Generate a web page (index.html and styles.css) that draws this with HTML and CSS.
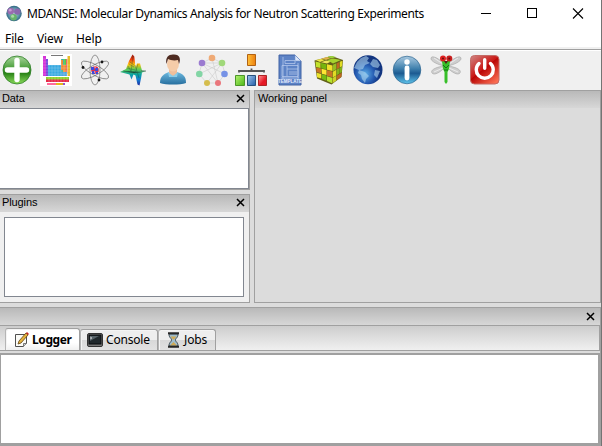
FILE: index.html
```html
<!DOCTYPE html>
<html lang="en">
<head>
<meta charset="utf-8">
<title>MDANSE: Molecular Dynamics Analysis for Neutron Scattering Experiments</title>
<link rel="stylesheet" href="styles.css">
</head>
<body>
<div class="window">
  <header class="titlebar">
    <svg class="app-icon" viewBox="0 0 17 17"><defs><radialGradient id="app"><stop offset="0" stop-color="#b9d4d8"/><stop offset=".7" stop-color="#5b93a8"/><stop offset="1" stop-color="#2f6480"/></radialGradient></defs><circle cx="8.5" cy="8.5" r="8.2" fill="url(#app)"/><circle cx="5" cy="6" r="3.5" fill="#9a6cb0"/><circle cx="12" cy="6.5" r="3.4" fill="#8a68ae"/><circle cx="8" cy="12.5" r="3.5" fill="#68b36c"/><circle cx="4.500" cy="5" r="1.500" fill="#c3a0d2"/><circle cx="7" cy="11.500" r="1.600" fill="#a8dba4"/></svg>
    <h1 class="title">MDANSE: Molecular Dynamics Analysis for Neutron Scattering Experiments</h1>
    <div class="controls">
      <svg viewBox="0 0 12 12" shape-rendering="crispEdges"><path d="M1 5.500h10" stroke="#000"/></svg>
      <svg viewBox="0 0 12 12" shape-rendering="crispEdges"><path d="M1.500 .5h9v9h-9z" fill="none" stroke="#000"/></svg>
      <svg viewBox="0 0 12 12"><path d="M1 .5l10 10M11 .5l-10 10" stroke="#000" stroke-width="1.100"/></svg>
    </div>
  </header>
  <nav class="menu"><span class="m-file">File</span><span class="m-view">View</span><span class="m-help">Help</span></nav>
  <div class="toolbar">
    <svg viewBox="0 0 32 32"><defs><linearGradient id="gr" x2="0" y2="1"><stop offset="0" stop-color="#a9d69c"/><stop offset=".45" stop-color="#459b36"/><stop offset=".6" stop-color="#268015"/><stop offset="1" stop-color="#8cdc5c"/></linearGradient></defs><circle cx="16" cy="16" r="14" fill="url(#gr)" stroke="#2f7d28" stroke-width=".8"/><path d="M16 6.500v19M6.500 16h19" stroke="#fff" stroke-width="5.400" stroke-linecap="round"/></svg>
    <svg viewBox="0 0 32 32"><path fill="#fff" d="M0 0h32v32H0z"/><path d="M11 1.500h12" stroke="#555" stroke-width=".8"/><path fill="#d435d8" d="M3 2h3v20H3z"/><path fill="#7b49db" d="M6 5h2v17H6z"/><path fill="#36a9e0" d="M8 11h14v11H8z"/><path fill="#35b49a" d="M21 5h4v13h-4z"/><path fill="#ef8a32" d="M21 6h2v10h-2zM23 11h3v9h-3z"/><path fill="#57c94a" d="M24 5h2v6h-2z"/><path fill="#ef5a51" d="M26 5h1.500v15H26z"/><path fill="#e6bc2b" d="M27.500 2H30v20h-2.500z"/><path fill="#4ba5df" d="M22 18h5v4h-5z"/><path fill="#8fd32b" d="M6 23h23v3H6z"/><path fill="#e62a47" d="M6 25.500h23V28H6z"/><path fill="#ff6a9c" d="M7 29h9v2H7z"/><path fill="#e3ba1c" d="M16 29h7v2h-7z"/><path fill="#9751ce" d="M23 29h2v2h-2z"/><path d="M3 5h3M3 8h5M3 11h27M3 14h27M3 17h27M3 20h27M9 10v12M12 10v12M15 10v12M18 10v12M9 23v5M12 23v5M15 23v5M18 23v5M21 5v23M24 5v23M27 5v23" stroke="#fff" stroke-width=".4" opacity=".5"/></svg>
    <svg viewBox="0 0 32 32"><g fill="none" stroke="#666" stroke-width=".65"><ellipse cx="16" cy="16" rx="5" ry="15"/><ellipse cx="16" cy="16" rx="5" ry="15.500" transform="rotate(60 16 16)"/><ellipse cx="16" cy="16" rx="5" ry="15.500" transform="rotate(120 16 16)"/></g><circle cx="16" cy="16" r="3.800" fill="#e22e45"/><path d="M12 13h3v3h-3zM16 14h3v3h-3zM13 17h3v3h-3zM17 18h2v2h-2z" fill="#3f49dd"/><path d="M15 12l2 1-1 2zM15 17l2 1-2 1z" fill="#f4a1ac"/><g fill="#161616"><circle cx="23" cy="8" r="1.400"/><circle cx="4" cy="13.500" r="1.400"/><circle cx="20" cy="26" r="1.400"/></g></svg>
    <svg viewBox="0 0 32 32"><defs><linearGradient id="jet" x2="0" y1="0" y2="1"><stop offset="0" stop-color="#9c160c"/><stop offset=".16" stop-color="#ef3b09"/><stop offset=".32" stop-color="#ffc20b"/><stop offset=".47" stop-color="#67cd50"/><stop offset=".64" stop-color="#0aa5a1"/><stop offset=".82" stop-color="#157bd0"/><stop offset="1" stop-color="#1b279f"/></linearGradient></defs><path d="M2 18l6-3 3-8L14.500 .5l1.800 2 1.200 11 1.500-4 3 0 2 7 4 .5-4 1.500-1 6-1.500 7-2-1-2-9-2-1-2 5-2-5z" fill="url(#jet)"/><path d="M23 17h5" stroke="#555" stroke-width=".7"/><path d="M5 17l11 2 7-1M10 12l4 7M15 2l-2 16M17 11l4 13M20 10l-3 9M12 8l4 3M11 10l5 3M9 14l8 2" stroke="#173e39" stroke-width=".5" opacity=".65"/></svg>
    <svg viewBox="0 0 32 32"><defs><linearGradient id="bl" x2="0" y2="1"><stop offset="0" stop-color="#6db9df"/><stop offset="1" stop-color="#276f9f"/></linearGradient></defs><path d="M3 29c0-7 4-9 9-11h8c6 2 9 4 9 11-6 2-20 2-26 0z" fill="url(#bl)"/><path d="M12 14h8v5c-2 4-6 4-8 0z" fill="#efbd99"/><path d="M11 18l5 4 5-4-1 5h-8z" fill="#89cce9"/><path d="M12.500 18q3.500 6 7 0l-1-3h-5z" fill="#efbf9c"/><ellipse cx="16" cy="10" rx="6" ry="7.500" fill="#f5cca9"/><path d="M9.500 10C8 3 12 0 17 .5c6 0 7 5 5 9.500l-1-4c-4 1-8 0-10-1z" fill="#4e2b21"/></svg>
    <svg viewBox="0 0 32 32"><path d="M16 4l10 5 3 11-7 9-11 0-8-9 3-11zM6 9h20L11 29M16 4l6 25M3 20l23-11M6 9l23 11M6 9l16 20" fill="none" stroke="#c4c4c4" stroke-width=".5"/><circle cx="16" cy="4" r="3.300" fill="#efaa76"/><circle cx="6" cy="9" r="3.300" fill="#9b7bd0"/><circle cx="26" cy="9" r="3.300" fill="#a0d87a"/><circle cx="3.300" cy="20" r="3.300" fill="#83d5a5"/><circle cx="28.500" cy="20" r="3.300" fill="#7692e6"/><circle cx="11" cy="29" r="3" fill="#d5bd4d"/><circle cx="22" cy="29" r="3" fill="#ea767c"/></svg>
    <svg viewBox="0 0 32 32"><defs><linearGradient id="og"><stop stop-color="#ffc038"/><stop offset="1" stop-color="#ed8010"/></linearGradient><linearGradient id="gg" x2="1" y2="1"><stop stop-color="#b4f36f"/><stop offset="1" stop-color="#4bb517"/></linearGradient><linearGradient id="bb" x2="1" y2="1"><stop stop-color="#9dc3ed"/><stop offset="1" stop-color="#225da6"/></linearGradient><linearGradient id="rr" x2="1" y2="1"><stop stop-color="#ff9a9a"/><stop offset=".6" stop-color="#e51825"/></linearGradient></defs><path d="M12.500.5h8v11h-8z" fill="url(#og)" stroke="#b26213"/><path d="M4 18.500v-1.500h25v1.500M16.500 14.500v2" fill="none" stroke="#555" stroke-width="1.800"/><path d="M.5 21.500h9v10h-9z" fill="url(#gg)" stroke="#4d9629"/><path d="M12.500 21.500h8v10h-8z" fill="url(#bb)" stroke="#28517d"/><path d="M23.500 21.500h8v10h-8z" fill="url(#rr)" stroke="#ad2525"/></svg>
    <svg viewBox="0 0 32 32"><path d="M5 1h16l6 6v24H5z" fill="#5d83c6" stroke="#4163a4"/><path d="M21 1v6h6z" fill="#dce7fa" stroke="#7291c9" stroke-width=".6"/><g fill="none" stroke="#bed0ef" stroke-width=".7"><path d="M11 6.500h10v3H11zM8 11.500h16v11H8zM13 12v10M13 15h11M15 18h8M15 20h8M9 3v22M24 9v15M7 24h18"/></g><text x="16" y="29" text-anchor="middle" class="template">TEMPLATE</text></svg>
    <svg viewBox="0 0 32 32"><path fill="#625f18" d="M1.500 6.500l17-4.500 11.500 4-1.500 17-10 7.500L4 24.500z"/><path fill="#f1e547" d="M2.500 6l5.500-1 4 1-5 2z"/><path fill="#dcb34a" d="M8.500 4.500l5.500-1.500 4 1-5 2z"/><path fill="#9bd53c" d="M14.500 2.500l4.500-.5 4 1-5 1.500z"/><path fill="#efe65c" d="M8 8.300l5-1.800 5 1-4 2z"/><path fill="#a6d32e" d="M14 6l6-1.500 8 1.500-8 3.500z"/><path fill="#c2e32b" d="M2.500 7.500l5 1.300v5.200l-4.500-1z"/><path fill="#76b50d" d="M8 9l5.500 1.200v5.300L8.300 14.200z"/><path fill="#efe02b" d="M14 10.300l5.500 1.200v5.500L14 15.800z"/><path fill="#c97526" d="M3.200 13.500l4.800 1.100v4.600l-4.500-1.200z"/><path fill="#ffe534" d="M8.500 14.800l5 1.100v5.200L8.800 19.800z"/><path fill="#c97526" d="M14 16.300l5.300 1.300v5.600L14 21.700z"/><path fill="#ebe22b" d="M3.700 18.700l4.600 1.200v4.600l-4.300-1.200z"/><path fill="#76bc13" d="M8.900 20.300l4.600 1.300v5.200L9 24.900z"/><path fill="#b6e331" d="M14 22.200l5 1.500v5.600l-5-2.200z"/><path fill="#95bd22" d="M20 10.800l3.300-1.500v6l-3.400 2z"/><path fill="#bd6722" d="M23.700 9.200l2.700-1.200v5.700l-2.700 1.500z"/><path fill="#e1dc25" d="M26.800 7.800l2.700-1.100-.4 5.600-2.300 1.200zM19.800 17.800l3.500-2v5.600l-3.600 2.200z"/><path fill="#82b31b" d="M23.700 15.600l2.700-1.600v5.600l-2.700 1.700zM26.800 13.900l2.300-1.300-.3 5.400-2 1.300z"/><path fill="#cbd328" d="M19.500 24l3.800-2.200v4.600l-3.800 2.800z"/><path fill="#bd6722" d="M23.700 21.700l5-3-.3 4-4.700 3.500z"/></svg>
    <svg viewBox="0 0 32 32"><defs><radialGradient id="gl" cx=".4" cy=".65"><stop stop-color="#5caee8"/><stop offset=".65" stop-color="#2459b0"/><stop offset="1" stop-color="#123580"/></radialGradient></defs><circle cx="16" cy="15.800" r="14.500" fill="url(#gl)"/><path d="M9 4l5-2 3 2-2 3 3 2-5 2-2 4-4 1-5-2 3-6zM7 16l6 2 4 4-3 3-1 4-3-4-1-4-3-2zM21 5l4 1 3 5-2 3-5-1-3-3zM23 16l5 1-3 7-3-3z" fill="#add4ef" opacity=".6"/></svg>
    <svg viewBox="0 0 32 32"><defs><linearGradient id="in" x2="0" y2="1"><stop stop-color="#a9c9e0"/><stop offset=".45" stop-color="#3f80ad"/><stop offset=".62" stop-color="#1c5a91"/><stop offset="1" stop-color="#5fc5ec"/></linearGradient></defs><circle cx="16" cy="16" r="13.800" fill="url(#in)" stroke="#29638e" stroke-width=".7"/><circle cx="16" cy="8" r="2.700" fill="#fff"/><path d="M16 14v10" stroke="#fff" stroke-width="4.800" stroke-linecap="round"/></svg>
    <svg viewBox="0 0 32 32"><g fill="#cecece" stroke="#999" stroke-width=".5"><path d="M15 11C9 4 2 1 1 4s7 7 14 8zM17 11c6-7 13-10 14-7s-7 7-14 8zM14 12C6 13 0 16 2 19s9-1 13-6zM18 12c8 1 14 4 12 7s-9-1-13-6z"/></g><path d="M4 4l9 6M28 4l-9 6M4 18l9-4M28 18l-9-4" stroke="#fff" stroke-width=".6"/><path d="M12 7h8l-1 8-1.500 3v10l-1.500 2-1.500-2V18L13 15z" fill="#37bf29"/><path d="M13 11l3 3 3-3M14 16h4" stroke="#147316" fill="none"/><circle cx="13" cy="4.500" r="3" fill="#df2020"/><circle cx="19.300" cy="4.500" r="3" fill="#c71e1e"/><circle cx="13" cy="4.500" r="1" fill="#611"/><circle cx="19.300" cy="4.500" r="1" fill="#611"/><path d="M14 7h4l-2 3z" fill="#501f15"/></svg>
    <svg viewBox="0 0 32 32"><defs><linearGradient id="pw" x2=".8" y2="1"><stop stop-color="#cf8784"/><stop offset=".5" stop-color="#ca1714"/><stop offset=".52" stop-color="#b90706"/><stop offset="1" stop-color="#fb6d51"/></linearGradient></defs><rect x="1.500" y="1.500" width="28.500" height="28.500" rx="4" fill="url(#pw)" stroke="#c46b66"/><path d="M10 9.500a8.500 8.500 0 1 0 11.500 0M15.700 5.800v8.500" fill="none" stroke="#fff" stroke-width="3.400" stroke-linecap="round"/></svg>
  </div>
  <main class="workspace">
    <div class="left">
      <section class="pane data"><h2 class="caption">Data<svg class="close" viewBox="0 0 9 9"><path d="M1 1l7 7M8 1L1 8" stroke="#000" stroke-width="1.500"/></svg></h2><div class="list"></div></section>
      <section class="pane plugins"><h2 class="caption">Plugins<svg class="close" viewBox="0 0 9 9"><path d="M1 1l7 7M8 1L1 8" stroke="#000" stroke-width="1.500"/></svg></h2><div class="list"></div></section>
    </div>
    <section class="pane working"><h2 class="caption">Working panel</h2></section>
  </main>
  <section class="bottom">
    <div class="caption"><svg class="close" viewBox="0 0 9 9"><path d="M1 1l7 7M8 1L1 8" stroke="#000" stroke-width="1.500"/></svg></div>
    <div class="tabs">
      <div class="tab active"><svg viewBox="0 0 16 16"><path d="M1.500 2.500h11v9l-3 3h-8z" fill="#fbfbf7" stroke="#505050"/><path d="M9.500 14.500v-3h3" fill="#d0d0d0" stroke="#777"/><path d="M4 12l1-3 7-8 2 2-7 8z" fill="#e4b33d" stroke="#634415" stroke-width=".8"/><path d="M12 1l1-1 2 2-1 1z" fill="#c82222"/></svg><span>Logger</span></div>
      <div class="tab console"><svg viewBox="0 0 16 16"><rect x=".5" y="1.500" width="15" height="13" rx="1.500" fill="#777" stroke="#333"/><rect x="2" y="3" width="12" height="9" fill="#20282c" stroke="#080b0d"/><path d="M3 4h9L3 9z" fill="#566268"/><path d="M3 5l2 1-2 1" fill="none" stroke="#ddd" stroke-width=".7"/></svg><span>Console</span></div>
      <div class="tab jobs"><svg viewBox="0 0 16 16"><path d="M4 2c0 4 2.500 4 2.500 6S4 10 4 14h9c0-4-2.500-4-2.500-6S13 6 13 2z" fill="#9fbccb" stroke="#3b484f"/><path d="M5.500 4.500h6L9 7.500H8zM5 13.500l3.500-3.500 3.500 3.500z" fill="#d0aa55"/><path d="M3 1.200h11M3 14.800h11" stroke="#262626" stroke-width="2"/></svg><span>Jobs</span></div>
    </div>
    <div class="log"></div>
  </section>
</div>
</body>
</html>
```
FILE: styles.css
```css
* { box-sizing: border-box; }
body { margin: 0; font: 12px/16px "Noto Sans", "Open Sans", sans-serif; color: #000; }
svg { display: block; flex: none; }
h1, h2 { margin: 0; font-weight: normal; }
.window { width: 602px; height: 446px; display: flex; flex-direction: column; overflow: hidden; background: #dcdcdc; border-right: 1px solid #747474; }
.titlebar { height: 27px; flex: none; display: flex; align-items: center; padding-left: 6px; background: #fff; }
.app-icon { width: 16px; height: 17px; }
.title { margin-left: 5px; font-size: 12px; letter-spacing: -.365px; white-space: nowrap; }
.controls { margin-left: auto; display: flex; gap: 34px; padding-right: 17px; }
.controls svg { width: 12px; height: 12px; }
.menu { height: 20px; flex: none; display: flex; padding: 4px 0 0 5px; background: #fff; letter-spacing: -.1px; }
.m-file { width: 32px; }
.m-view { width: 39px; }
.toolbar { height: 43px; flex: none; display: flex; gap: 7px; padding: 7px 0 0 1px; background: linear-gradient(#f0f0f0 2px, #a0a0a0 2px 3px, #fff 3px 4px, #f0f0f0 4px); }
.toolbar svg { width: 32px; height: 32px; }
.template { font: bold 4.500px "Liberation Sans", sans-serif; fill: #e7efff; }
.workspace { height: 213px; flex: none; display: flex; gap: 4px; }
.left { width: 250px; display: flex; flex-direction: column; gap: 4px; }
.pane { border: 1px solid #a0a0a0; }
.left .pane { border-left: 0; }
.caption { height: 17px; flex: none; display: flex; justify-content: space-between; align-items: center; padding: 0 4px 2px 2px; background: linear-gradient(#b9b9b9, #d7d7d7); font: 11px/15px "Liberation Sans", sans-serif; letter-spacing: -.1px; }
.close { width: 9px; height: 9px; margin-left: auto; }
.data { height: 100px; display: flex; flex-direction: column; }
.data .list { flex: 1; background: #fff; border: 1px solid #828790; border-left: 0; }
.plugins { height: 109px; display: flex; flex-direction: column; background: #f0f0f0; }
.plugins .list { flex: 1; margin: 5px 5px 5px 4px; background: #fff; border: 1px solid #828790; }
.working { flex: 1; }
.working .caption { padding-left: 3px; }
.bottom { flex: 1; margin-top: 4px; display: flex; flex-direction: column; border-top: 1px solid #a0a0a0; border-right: 1px solid #a0a0a0; }
.bottom .caption { padding-right: 5px; padding-bottom: 1px; }
.tabs { height: 26px; flex: none; display: flex; align-items: flex-end; padding-left: 5px; border: 1px solid #a0a0a0; border-width: 1px 1px 1px 0; background: linear-gradient(#cdcdcd, #f0f0f0); }
.tab { height: 21px; display: flex; align-items: center; gap: 3px; border: 1px solid #a0a0a0; border-bottom: 0; border-left-color: #b5b5b5; border-radius: 3px 3px 0 0; background: linear-gradient(#eee 50%, #d8d8d8 50%, #e2e2e2); box-shadow: inset 1px 1px #f4f4f4; padding-left: 6px; }
.tab svg { width: 16px; height: 16px; }
.active { width: 75px; height: 22px; padding-left: 8px; gap: 2px; background: linear-gradient(#fff 65%, #f0f0f0); font-weight: bold; letter-spacing: -.4px; }
.console { width: 78px; letter-spacing: -.2px; }
.jobs { width: 58px; letter-spacing: -.1px; }
.log { flex: 1; margin-top: 2px; background: #fff; border: solid #a0a0a0; border-width: 2px 2px 3px 1px; }
```
